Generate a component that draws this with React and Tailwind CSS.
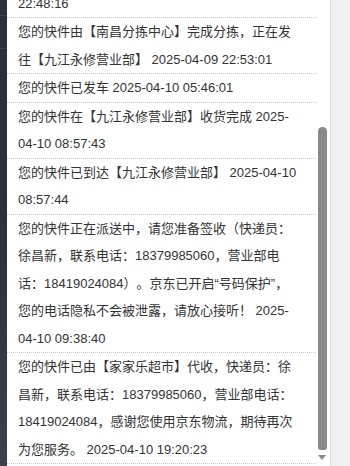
import React from "react";

const items = [
  "您的快件已到达【南昌分拣中心】 2025-04-09 22:48:16",
  "您的快件由【南昌分拣中心】完成分拣，正在发往【九江永修营业部】 2025-04-09 22:53:01",
  "您的快件已发车 2025-04-10 05:46:01",
  "您的快件在【九江永修营业部】收货完成 2025-04-10 08:57:43",
  "您的快件已到达【九江永修营业部】 2025-04-10 08:57:44",
  "您的快件正在派送中，请您准备签收（快递员：徐昌新，联系电话：18379985060，营业部电话：18419024084）。京东已开启“号码保护”，您的电话隐私不会被泄露，请放心接听！ 2025-04-10 09:38:40",
  "您的快件已由【家家乐超市】代收，快递员：徐昌新，联系电话：18379985060，营业部电话：18419024084，感谢您使用京东物流，期待再次为您服务。 2025-04-10 19:20:23",
];

export default function App() {
  return (
    <div
      className="flex h-[466px] w-[350px] overflow-hidden bg-white text-[#333] [text-spacing-trim:space-all]"
      style={{ fontFamily: '"Liberation Sans", "Noto Sans CJK SC", sans-serif' }}
    >
      <div className="relative w-[7px] shrink-0 bg-gradient-to-b from-[#2a3038] via-[#2c323a] to-[#3b424b]">
        <div className="absolute left-0 top-[15px] w-full border-t border-dotted border-[#4a525c]" />
        <div className="absolute left-0 top-[48px] w-full border-t border-dotted border-[#4a525c]" />
      </div>
      <div className="w-[309px] shrink-0 overflow-hidden">
        <div className="mt-[-38px]">
          {items.map((t, i) => (
            <div
              key={i}
              className="border-b border-dotted border-[#c8c8c8] pl-[11px] pr-[15px] text-[13px] leading-[27.5px]"
            >
              {t}
            </div>
          ))}
        </div>
      </div>
      <div className="flex w-[14px] shrink-0 flex-col items-start bg-white pl-[2px] pt-[127px] pb-[6px]">
        <div className="w-[9px] flex-1 rounded-t-[5px] rounded-b-[3px] bg-[#898989]" />
        <div className="mt-[5px] h-0 w-0 border-x-[4.5px] border-t-[5px] border-x-transparent border-t-[#8a8a8a]" />
      </div>
      <div className="flex-1 border-l border-[#dedede] bg-[#f0f0f0]" />
    </div>
  );
}
